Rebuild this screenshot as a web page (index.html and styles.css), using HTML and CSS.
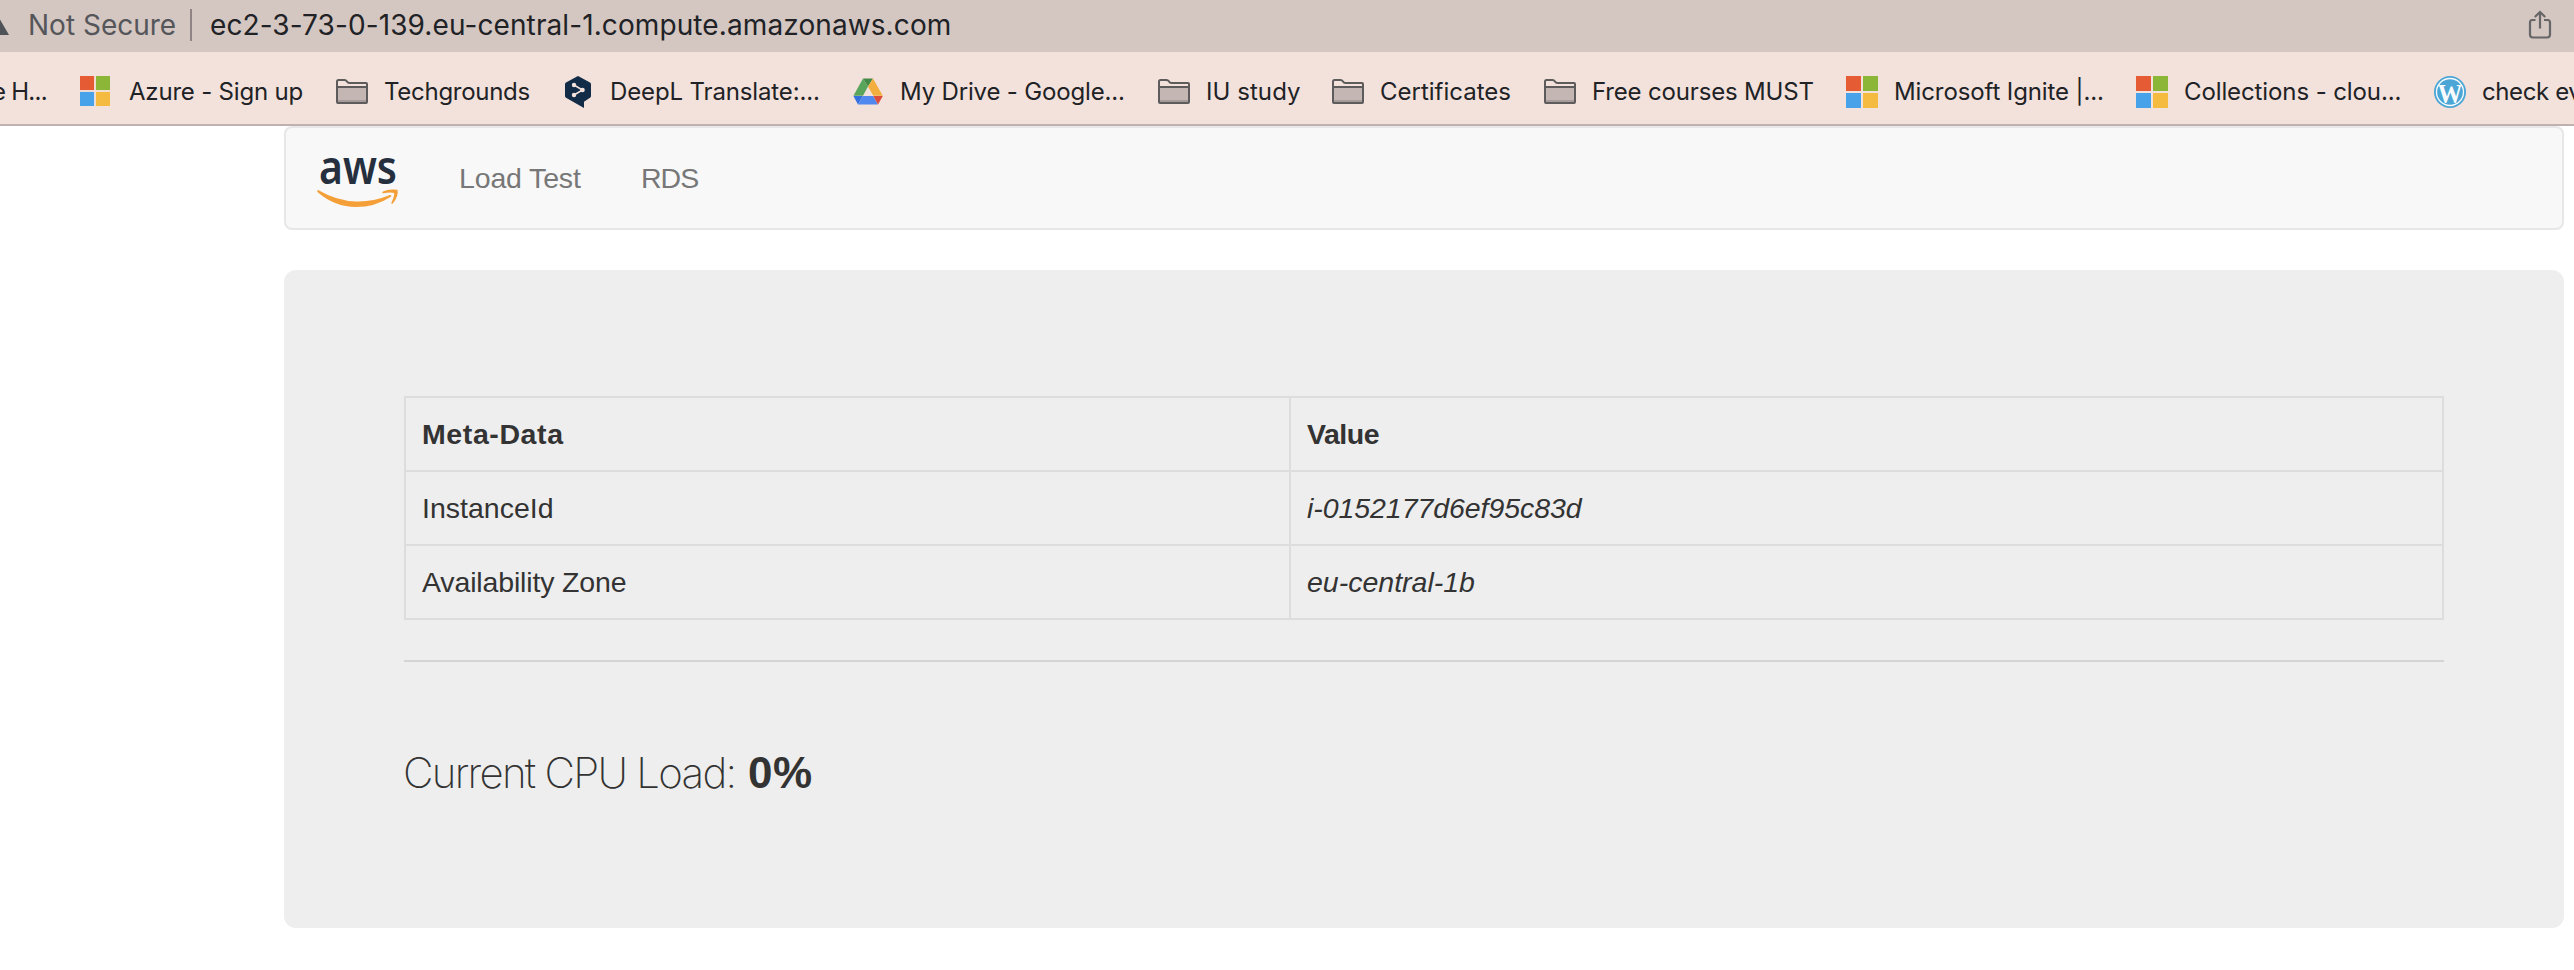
FILE: index.html
```html
<!DOCTYPE html>
<html lang="en">
<head>
<meta charset="utf-8">
<title>Load Test</title>
<link rel="stylesheet" href="styles.css">
</head>
<body>
<svg class="defs" width="0" height="0">
  <symbol id="folder" viewBox="0 0 32 32">
    <rect x="2" y="11" width="28" height="15" fill="#c4b6b2"/>
    <rect x="2" y="24" width="28" height="2" fill="#a59b98"/>
    <path d="M1 26V5.500Q1 4 2.500 4H8.500Q10 4 10.800 5.200Q11.800 7 13.500 7H30Q31 7 31 8V26Q31 27 30 27H2Q1 27 1 26ZM1 11H31" fill="none" stroke="#5d5b5b" stroke-width="2"/>
  </symbol>
  <symbol id="windows" viewBox="0 0 32 32">
    <path fill="#e55b33" d="M0 0h15v15H0z"/><path fill="#8cb638" d="M17 0h15v15H17z"/>
    <path fill="#47a2ea" d="M0 17h15v15H0z"/><path fill="#f5bb40" d="M17 17h15v15H17z"/>
  </symbol>
</svg>
<div class="address">
  <svg class="warn" viewBox="0 0 9 36"><path d="M-12 35L-1.500 17L9 35Z" fill="#4f5256"/></svg>
  <span class="insecure">Not Secure</span>
  <span class="sep"></span>
  <span class="url">ec2-3-73-0-139.eu-central-1.compute.amazonaws.com</span>
  <svg class="share" viewBox="0 0 24 30"><path d="M7.500 10H4.500Q2 10 2 12.500V24.500Q2 27.500 5 27.500H19Q22 27.500 22 24.500V12.500Q22 10 19.500 10H16M12 18.500V2.500M6.800 7L12 2L17.200 7" fill="none" stroke="#666568" stroke-width="2.200"/></svg>
</div>
<nav class="bookmarks">
  <div class="bm cut"><span class="t0">e H...</span></div>
  <div class="bm"><svg class="ic ms30" viewBox="0 0 32 32"><use href="#windows"/></svg><span class="t t1">Azure - Sign up</span></div>
  <div class="bm"><svg class="ic"><use href="#folder"/></svg><span class="t t2">Techgrounds</span></div>
  <div class="bm deepl"><svg class="ic" viewBox="0 0 32 32"><path d="M14 0.500Q13 -0.300 12 0.500L1 6.500Q0 7 0 8.300V20Q0 21.300 1 21.800L19 32V25.700L25 21.800Q26 21.200 26 20V8.300Q26 7 25 6.500Z" fill="#122c47"/><path d="M9 9L17.500 14L9 19" fill="none" stroke="#f3e1db" stroke-width="1.600"/><g fill="#f3e1db"><circle cx="9" cy="9" r="2.200"/><circle cx="17.500" cy="14" r="2.300"/><circle cx="9" cy="19" r="2.200"/></g></svg><span class="t t3">DeepL Translate:...</span></div>
  <div class="bm drive"><svg class="ic" viewBox="0 0 32 32"><path d="M10 2.500L0.400 19.700H10L15 10.500Z" fill="#59a55c"/><path d="M10 2.500H20L15 10.500Z" fill="#438a46"/><path d="M20 2.500L29.800 19.700H20.300L15 10.500Z" fill="#f2ae3f"/><path d="M0.400 20H9.800L5 28.500Z" fill="#3371df"/><path d="M9.800 20H20.200L25 28.500H5Z" fill="#5088ef"/><path d="M20.300 20H29.800L25 28.500Z" fill="#dc4c3c"/></svg><span class="t t4">My Drive - Google...</span></div>
  <div class="bm"><svg class="ic"><use href="#folder"/></svg><span class="t t5">IU study</span></div>
  <div class="bm"><svg class="ic"><use href="#folder"/></svg><span class="t t6">Certificates</span></div>
  <div class="bm"><svg class="ic"><use href="#folder"/></svg><span class="t t7">Free courses MUST</span></div>
  <div class="bm"><svg class="ic"><use href="#windows"/></svg><span class="t t8">Microsoft Ignite |...</span></div>
  <div class="bm"><svg class="ic"><use href="#windows"/></svg><span class="t t9">Collections - clou...</span></div>
  <div class="bm"><svg class="ic" viewBox="0 0 32 32"><circle cx="16" cy="16" r="16" fill="#4ba6d6"/><circle cx="16" cy="16" r="13.500" fill="none" stroke="#f7fbfd" stroke-width="1.300"/><text x="3.500" y="27" class="wp" textLength="25" lengthAdjust="spacingAndGlyphs">W</text></svg><span class="t t10">check ev</span></div>
</nav>
<main class="container">
  <header class="navbar">
    <svg class="logo" viewBox="0 0 84 56"><text x="2" y="33.800" class="aws" textLength="78" lengthAdjust="spacingAndGlyphs">aws</text><path d="M0.500 40Q-0.300 41.300 1 42.500Q18 57 39 57Q58 57 73.500 47Q75.500 45 73 45Q56 52 39 51.500Q20 51 1.500 40.300Q1 39.800 0.500 40Z" fill="#f49f37"/><path d="M66 43.300Q64 43.100 66.500 41.300Q72 38.500 80.500 39.800Q81.800 46 76 53.300Q74 55 74.500 52.500Q78 45 77 43Q74 42 66 43.300Z" fill="#f49f37"/></svg>
    <a class="link load">Load Test</a>
    <a class="link rds">RDS</a>
  </header>
  <section class="jumbotron">
    <table>
      <tr><th class="c1"><span class="meta">Meta-Data</span></th><th><span class="val">Value</span></th></tr>
      <tr><td>InstanceId</td><td><i class="iid">i-0152177d6ef95c83d</i></td></tr>
      <tr><td><span class="az">Availability Zone</span></td><td><i>eu-central-1b</i></td></tr>
    </table>
    <hr>
    <p class="cpu"><span class="cpu-label">Current CPU Load:</span><b>0%</b></p>
  </section>
</main>
</body>
</html>
```
FILE: styles.css
```css
*{box-sizing:border-box}
body{margin:0;width:2574px;height:970px;overflow:hidden;background:#fff;color:#333;font-family:"Liberation Sans",Arial,sans-serif}
.defs{display:block;height:0}
.address{height:52px;padding-bottom:3px;background:#d4c6c1;display:flex;align-items:center;font-family:Inter,sans-serif;font-size:28px;color:#202226;white-space:nowrap}
.warn{width:9px;height:36px;align-self:flex-start}
.insecure{width:163px;margin-left:19px;color:#54565a}
.sep{width:2px;height:32px;margin-left:-1px;background:#8f8483}
.url{margin-left:18px;letter-spacing:.1px;flex:1}
.share{width:24px;height:30px;margin:1px 22px 0 0}
.bookmarks{height:74px;padding-top:6px;background:#f3e1db;border-bottom:2px solid #bfb2ae;display:grid;grid-template-columns:80px 256px 229px 288px 305px 174px 212px 302px 290px 298px 140px;font-family:Inter,sans-serif;font-size:24px;color:#202226;white-space:nowrap}
.bm{display:flex;align-items:center;gap:16px;min-width:0}
.cut{justify-content:flex-end;padding-right:33px}
.ic{width:32px;height:32px;flex:none;margin-top:2px}
.ms30{width:30px;height:30px;margin-top:0}
.deepl{gap:13px}
.drive{gap:15px}
.t0{letter-spacing:-.7px}
.t1{letter-spacing:-.194px;margin-left:3px}
.t2{letter-spacing:-.282px}
.t3{letter-spacing:-.136px}
.t4{letter-spacing:-.167px}
.t5{letter-spacing:.06px}
.t7{letter-spacing:-.167px}
.t8{letter-spacing:-.114px}
.t9{letter-spacing:-.106px}
.t10{letter-spacing:-.4px}
.wp{font:bold 27px "Liberation Serif",serif;fill:#f7fbfd}
.container{width:2280px;margin-left:284px}
.navbar{height:104px;margin-bottom:40px;border:2px solid #e7e7e7;border-radius:8px;background:#f8f8f8;display:flex;align-items:center;font-size:28.5px;color:#777}
.logo{width:84px;height:56px;margin-left:31px;overflow:visible}
.aws{font:600 47px "Noto Sans","Open Sans",sans-serif;fill:#252f3e}
.load{width:182px;margin-left:58px;letter-spacing:-.15px}
.rds{letter-spacing:-1px}
.jumbotron{height:658px;padding:126px 120px 0;border-radius:12px;background:#eee}
table{width:2040px;border-collapse:collapse;table-layout:fixed;font-size:28.5px}
tr{height:74px}
th,td{padding:0 16px;border:2px solid #ddd;text-align:left}
.c1{width:885px}
.meta{letter-spacing:.6px}
.val{letter-spacing:-.47px}
.az{letter-spacing:-.15px}
.iid{letter-spacing:-.06px}
hr{height:2px;margin:40px 0 0;border:0;background:#d5d5d5}
.cpu{display:flex;align-items:baseline;margin:85px 0 0;font-size:42px;line-height:52px;white-space:nowrap}
.cpu-label{width:345px;margin-left:-1px;font-family:Inter,sans-serif;font-weight:200;letter-spacing:-1.72px}
.cpu b{font-size:44px;letter-spacing:.5px}
```
